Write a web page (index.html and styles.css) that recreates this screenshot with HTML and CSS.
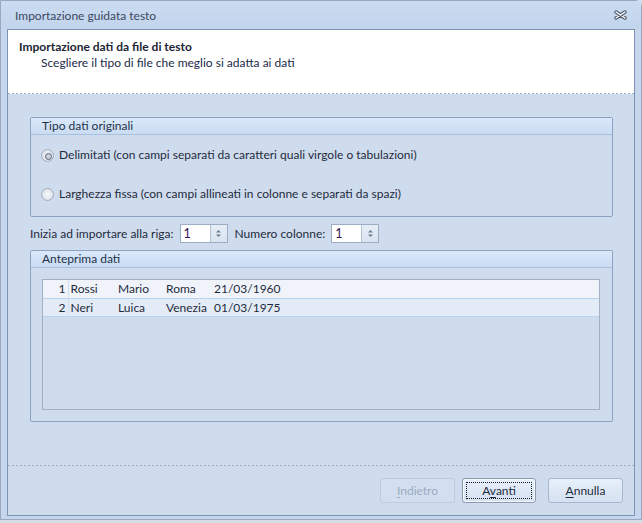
FILE: index.html
```html
<!DOCTYPE html>
<html lang="it">

<head>
    <meta charset="UTF-8" />
    <meta name="viewport" content="width=device-width, initial-scale=1.0" />
    <title>Importazione guidata testo</title>
    <link rel="stylesheet" href="styles.css">
</head>

<body>
    <div class="window">
        <div class="titlebar">
            <span class="title">Importazione guidata testo</span>
            <svg class="close" width="13" height="10" viewBox="0 0 13 10">
                <path d="M2 2 L11 8 M11 2 L2 8" stroke="#4b5468" stroke-width="3.4" stroke-linecap="round" />
                <path d="M2 2 L11 8 M11 2 L2 8" stroke="#ffffff" stroke-width="1.5" stroke-linecap="round" />
            </svg>
        </div>

        <div class="client">
            <div class="header">
                <div class="header-title">Importazione dati da file di testo</div>
                <div class="header-sub">Scegliere il tipo di file che meglio si adatta ai dati</div>
            </div>
            <div class="rule"></div>

            <div class="content">
                <div class="group">
                    <div class="group-head">Tipo dati originali</div>
                    <div class="options">
                        <div class="option"><span class="radio checked"></span>Delimitati (con campi separati da caratteri quali virgole o tabulazioni)</div>
                        <div class="option"><span class="radio"></span>Larghezza fissa (con campi allineati in colonne e separati da spazi)</div>
                    </div>
                </div>

                <div class="start-row">
                    <span>Inizia ad importare alla riga:</span>
                    <div class="spin">
                        <span class="spin-value">1</span>
                        <span class="spin-btn">
                            <svg width="7" height="11" viewBox="0 0 7 11">
                                <path d="M3.5 2 L6 4.5 L1 4.5 Z M1 6.5 L6 6.5 L3.5 9 Z" fill="#6d7a8c" />
                            </svg>
                        </span>
                    </div>
                    <span class="label-cols">Numero colonne:</span>
                    <div class="spin">
                        <span class="spin-value">1</span>
                        <span class="spin-btn">
                            <svg width="7" height="11" viewBox="0 0 7 11">
                                <path d="M3.5 2 L6 4.5 L1 4.5 Z M1 6.5 L6 6.5 L3.5 9 Z" fill="#6d7a8c" />
                            </svg>
                        </span>
                    </div>
                </div>

                <div class="group preview">
                    <div class="group-head">Anteprima dati</div>
                    <div class="grid">
                        <table>
                            <tr class="odd">
                                <td class="num">1</td>
                                <td class="col">Rossi</td>
                                <td class="col">Mario</td>
                                <td class="col">Roma</td>
                                <td>21/03/1960</td>
                            </tr>
                            <tr class="even">
                                <td class="num">2</td>
                                <td class="col">Neri</td>
                                <td class="col">Luica</td>
                                <td class="col">Venezia</td>
                                <td>01/03/1975</td>
                            </tr>
                        </table>
                    </div>
                </div>
            </div>

            <div class="rule"></div>
            <div class="footer">
                <button class="btn" disabled><u>I</u>ndietro</button>
                <button class="btn default">A<u>v</u>anti</button>
                <button class="btn cancel"><u>A</u>nnulla</button>
            </div>
        </div>
    </div>
</body>

</html>
```

FILE: styles.css
```css
* {
    margin: 0;
    padding: 0;
    box-sizing: border-box;
}

body {
    width: 642px;
    height: 523px;
    background-color: #d6dde7;
    font-family: Lato, "Noto Sans", sans-serif;
    font-size: 12px;
    color: #1f2b3d;
    overflow: hidden;
}

.window {
    width: 642px;
    height: 520px;
    background-color: #c6d7ed;
    border: 1px solid #98a8bd;
    border-radius: 0 7px 0 0;
    display: flex;
    flex-direction: column;
}

.titlebar {
    height: 28px;
    padding: 0 14px;
    display: flex;
    align-items: center;
    justify-content: space-between;
    background: linear-gradient(#cbdcf1, #c1d4eb);
}

.title {
    color: #3c4764;
    font-size: 12px;
}

.client {
    height: 487px;
    margin: 0 6px;
    border: 1px solid #7b93b5;
    background-color: #cfdcee;
    display: flex;
    flex-direction: column;
}

.header {
    height: 63px;
    padding: 9px 11px 0;
    background-color: #ffffff;
    line-height: 16px;
}

.header-title {
    font-weight: bold;
    color: #1b2535;
}

.header-sub {
    padding-left: 22px;
    color: #1b2a48;
}

.rule {
    height: 1px;
    background: repeating-linear-gradient(to right, #a4b1c3 0 2px, transparent 2px 4px);
}

.header + .rule {
    background-color: #ffffff;
}

.content {
    height: 371px;
    padding: 23px 21px 0 22px;
}

.group {
    border: 1px solid #8ca2c2;
    border-radius: 2px;
    height: 100px;
}

.group-head {
    height: 17px;
    line-height: 16px;
    padding-left: 11px;
    border-bottom: 1px solid #a8bfdd;
    background: linear-gradient(#dae8fa, #cadcf2);
    color: #23324a;
}

.options {
    padding: 12px 0 0 10px;
    line-height: 16px;
}

.option {
    display: flex;
    align-items: center;
}

.option + .option {
    margin-top: 23px;
}

.radio {
    position: relative;
    width: 13px;
    height: 13px;
    margin-right: 5px;
    border: 1px solid #a3aebd;
    border-radius: 50%;
    background: radial-gradient(circle, #f7f8fa 0, #e8ecf1 45%, #cdd4de 100%);
}

.radio.checked::after {
    content: "";
    position: absolute;
    left: 3px;
    top: 3px;
    width: 5px;
    height: 5px;
    border: 1px solid #566377;
    border-radius: 50%;
    background-color: #c9d1dc;
}

.start-row {
    margin-top: 7px;
    height: 19px;
    display: flex;
    align-items: center;
    color: #1f2b3d;
}

.spin {
    width: 48px;
    height: 19px;
    margin-left: 6px;
    border: 1px solid #9cadc4;
    background-color: #ffffff;
    display: flex;
}

.spin-value {
    flex: 1;
    padding-left: 3px;
    line-height: 17px;
    color: #3a1551;
    font-size: 12.5px;
}

.spin-btn {
    width: 17px;
    border-left: 1px solid #b4c2d4;
    background: linear-gradient(#e6edf6, #d9e4f1);
    display: flex;
    align-items: center;
    justify-content: center;
}

.label-cols {
    margin-left: 7px;
}

.preview {
    margin-top: 7px;
    height: 172px;
}

.grid {
    margin: 11px 12px 0 11px;
    height: 131px;
    border: 1px solid #a3b0c3;
}

table {
    width: 100%;
    border-collapse: collapse;
}

td {
    height: 18px;
    padding: 1px 0 0 2px;
    border-bottom: 1px solid #bad3ef;
    white-space: nowrap;
    line-height: 16px;
}

tr.odd {
    background-color: #f0f4fa;
}

tr.even {
    background-color: #e3ebf6;
}

td.num {
    width: 25px;
    padding: 1px 2px 0 0;
    text-align: right;
    border-right: 1px solid #d3e0f0;
}

td.col {
    width: 48px;
}

.footer {
    height: 48px;
    padding: 12px 11px 0 0;
    display: flex;
    justify-content: flex-end;
    align-items: flex-start;
}

.btn {
    position: relative;
    width: 75px;
    height: 25px;
    margin-left: 7px;
    border: 1px solid #a6b7ce;
    border-radius: 3px;
    background: linear-gradient(#e7effa, #d5e2f2);
    font-family: inherit;
    font-size: 12px;
    color: #1f2b3d;
}

.btn u {
    text-decoration-thickness: 1px;
    text-underline-offset: 2px;
}

.btn:disabled {
    border-color: #bccbde;
    background: #d3dff0;
    color: #9aaabf;
}

.btn.default {
    width: 74px;
    border-color: #8a9ab2;
    box-shadow: inset 0 0 0 1px #f7fafd;
}

.btn.default::after {
    content: "";
    position: absolute;
    left: 3px;
    top: 3px;
    right: 3px;
    bottom: 3px;
    border: 1px dotted #1a1a1a;
}

.btn.cancel {
    margin-left: 12px;
}
```
